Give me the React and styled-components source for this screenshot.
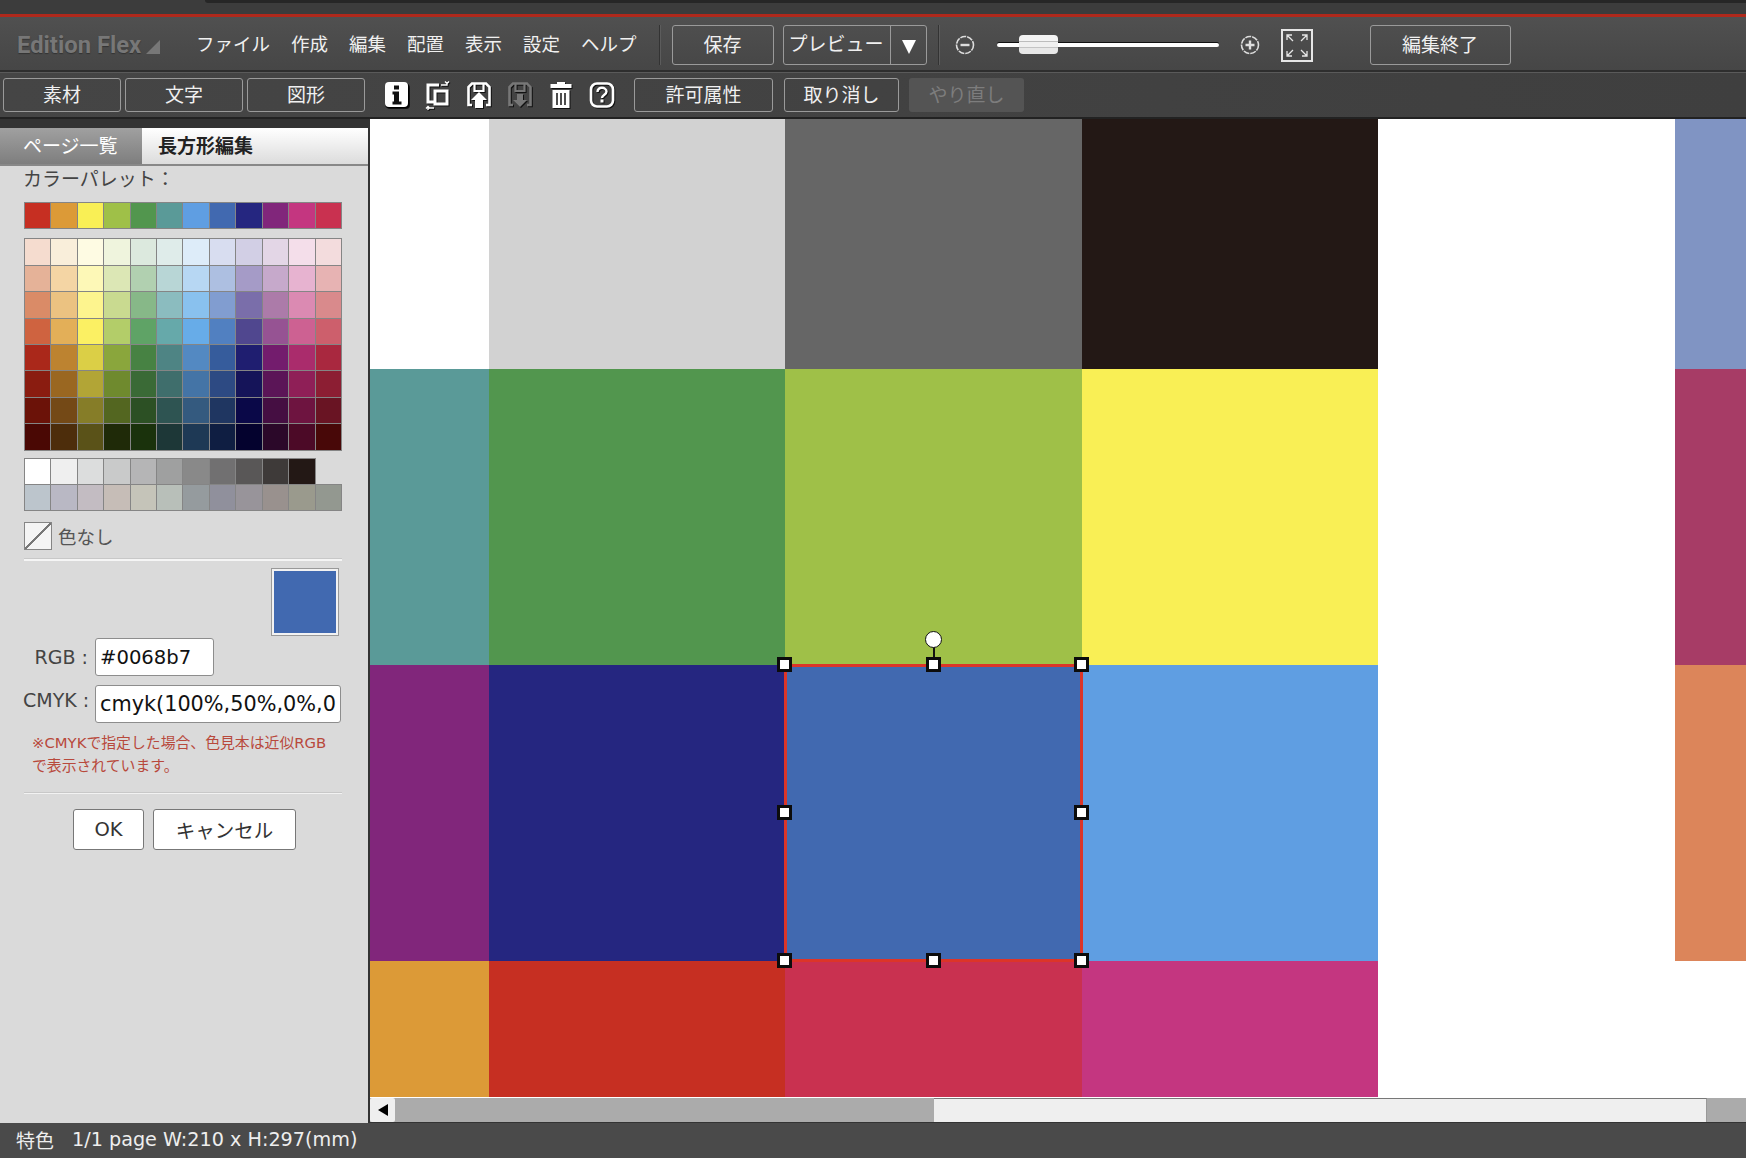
import React from "react";
import styled, { createGlobalStyle } from "styled-components";

const TOP_COLORS = ["#c62f22", "#dc9a37", "#f9ef55", "#9fc048", "#52964e", "#5a9a98", "#5f9ee2", "#4169b0", "#252680", "#81267b", "#c43680", "#c93150"];
const SHADES = [
  "#f5dccf #f9eeda #fefbe3 #eff4dd #dce9de #dfecea #ddecf9 #d8ddf0 #d2cfe5 #e3d6e6 #f4deea #f3dcdd",
  "#e5b298 #f4d5a4 #fdf8b7 #dce7b5 #b1d0b0 #b8d6d6 #b7d7f3 #adbfe1 #a59bc7 #c6a9cb #e7b3d0 #e7b3b3",
  "#da8b67 #ebc281 #fdf48e #c9da90 #87b888 #8bbcbf #89c1ee #819dd0 #7a6eaa #ac7ba9 #db8ab2 #d98a8c",
  "#cf6340 #e3af58 #fbf063 #b3cd69 #5fa366 #66a9aa #67ace8 #5180c1 #50478f #965393 #cd6192 #cd5f6c",
  "#aa281a #bd8330 #dbcf46 #8aa63c #478243 #4e8484 #5389c2 #365c9c #1f1e70 #731c6d #aa2c6c #a9283f",
  "#8a1c10 #9a6721 #b2a536 #6f8a2e #3a6a36 #3f6e6c #4474a6 #2d4a83 #151459 #5b1557 #8f1f57 #8c1e33",
  "#6b1208 #744916 #867d28 #536620 #2c5024 #2e5452 #345a7f #1f3661 #0a0848 #450e42 #6e1440 #691423",
  "#4a0804 #4d2d0b #5a5218 #1f2a08 #1a320c #1d3737 #1e3955 #0f1e42 #04022e #2b0829 #4c0a27 #480808",
].join(" ").split(" ");
const GREYS = [
  "#ffffff", "#efefef", "#dcdddd", "#c9caca", "#b5b5b6", "#9fa0a0", "#898989", "#717071", "#595757", "#3e3a39", "#231815", null,
  "#bcc5cc", "#b9b8c4", "#c3bcc2", "#c6bdb7", "#c5c4b9", "#b8bfb9", "#959b9e", "#90909c", "#98949a", "#99918e", "#9a9a8d", "#939890",
];
const SHEET = [
  "#ffffff", "#d2d2d2", "#666666", "#231815", "#ffffff", "#8094c3",
  "#5a9a98", "#52964e", "#9fc048", "#f9ef55", "#ffffff", "#a73c66",
  "#81267b", "#252680", "selected", "#5f9ee2", "#ffffff", "#dc855a",
  "#dc9a37", "#c62f22", "#c93150", "#c43680", "#ffffff", "#ffffff",
];
const HANDLES = [
  ["0%", "0%"], ["50%", "0%"], ["100%", "0%"],
  ["0%", "50%"], ["100%", "50%"],
  ["0%", "100%"], ["50%", "100%"], ["100%", "100%"],
];

const InfoIcon = () => (
  <svg width="26" height="28" viewBox="0 0 26 28">
    <rect x="1" y="2" width="24" height="25" rx="4" fill="#000" />
    <rect x="1" y="1" width="23" height="25" rx="4" fill="#fff" />
    <path d="M10 4.500h5v4h-5zM8.500 10.500h6.500v10h2.500v3h-9v-3H10v-7H8.500z" fill="#111" />
  </svg>
);
const ArrangeIcon = () => (
  <svg width="26" height="30" viewBox="0 0 26 30" fill="none" stroke="#fff">
    <path d="M14 4H3v17h6" strokeWidth="3" />
    <rect x="10" y="10" width="12" height="13" strokeWidth="3" />
    <path d="M16 4h6V1M20 .5l2 2 2-2M9 27H3v2M1 27.500l2-2 2 2" strokeWidth="1.400" />
  </svg>
);
const FloppyIcon = ({ $down }) => (
  <svg width="26" height="28" viewBox="0 0 26 28" fill="none" stroke={$down ? "#777" : "#fff"}>
    <path d="M6 24H2.500V6L6 2.500h14L23.500 6v18H20" strokeWidth="2.600" />
    <path d="M8.500 3v7h9V3" strokeWidth="2.200" />
    {$down ? (
      <path d="M10 13h6v6h4l-7 7-7-7h4z" fill="#777" stroke="none" />
    ) : (
      <path d="M13 11l8 8h-4v8H9v-8H5z" fill="#fff" stroke="none" />
    )}
  </svg>
);
const TrashIcon = () => (
  <svg width="24" height="28" viewBox="0 0 24 28">
    <path d="M8 3V1h8v2h6.500v4h-21V3z" fill="#fff" />
    <path d="M3.500 9h17v18h-17z" fill="#fff" />
    <path d="M8 12v12M12 12v12M16 12v12" stroke="#222" strokeWidth="1.600" />
  </svg>
);
const HelpIcon = () => (
  <svg width="26" height="28" viewBox="0 0 26 28" fill="none">
    <rect x="2" y="2.500" width="22" height="23" rx="6" stroke="#fff" strokeWidth="2.600" />
    <path d="M8.500 11c0-6 9-5 9-.5 0 3.500-4.500 3.500-4.500 6.500" stroke="#fff" strokeWidth="2.400" />
    <rect x="11.500" y="18.500" width="3" height="3" fill="#fff" />
  </svg>
);
const ZoomIcon = ({ $plus }) => (
  <svg width="20" height="20" viewBox="0 0 20 20" fill="none" stroke="#ddd">
    <circle cx="10" cy="10" r="8.500" strokeWidth="1.600" strokeDasharray="6 1" />
    <path d={$plus ? "M5.500 10h9M10 5.500v9" : "M5.500 10h9"} strokeWidth="2.400" />
  </svg>
);
const ExpandIcon = () => (
  <svg width="32" height="33" viewBox="0 0 32 33" fill="none" stroke="#e6e6e6">
    <rect x="1" y="1" width="30" height="31" strokeWidth="2" />
    <path d="M6 11V6h5M6 6l6 6M26 11V6h-5M26 6l-6 6M6 22v5h5M6 27l6-6M26 22v5h-5M26 27l-6-6" strokeWidth="1.300" />
  </svg>
);

const App = () => (
  <>
    <GlobalStyle />
    <Page>
      <TopStrip>
        <TopShade />
      </TopStrip>

      <MenuBar>
        <Logo>
          Edition Flex
          <LogoMark />
        </Logo>
        <Menu>
          {["ファイル", "作成", "編集", "配置", "表示", "設定", "ヘルプ"].map((m) => (
            <span key={m}>{m}</span>
          ))}
        </Menu>
        <Sep />
        <ToolButton $w={102}>保存</ToolButton>
        <PreviewGroup>
          <PreviewLabel>プレビュー</PreviewLabel>
          <PreviewArrow />
        </PreviewGroup>
        <Sep $second />
        <ZoomGroup>
          <ZoomIcon />
          <Slider>
            <SliderThumb />
          </Slider>
          <ZoomIcon $plus />
          <ExpandBox>
            <ExpandIcon />
          </ExpandBox>
        </ZoomGroup>
        <EndButton>編集終了</EndButton>
      </MenuBar>

      <SubBar>
        <ToolGroup>
          <ToolButton $w={118}>素材</ToolButton>
          <ToolButton $w={118}>文字</ToolButton>
          <ToolButton $w={118}>図形</ToolButton>
        </ToolGroup>
        <IconRow>
          <IconCell><InfoIcon /></IconCell>
          <IconCell><ArrangeIcon /></IconCell>
          <IconCell><FloppyIcon /></IconCell>
          <IconCell><FloppyIcon $down /></IconCell>
          <IconCell><TrashIcon /></IconCell>
          <IconCell><HelpIcon /></IconCell>
        </IconRow>
        <ActionGroup>
          <ToolButton $w={139}>許可属性</ToolButton>
          <ToolButton $w={115}>取り消し</ToolButton>
          <DisabledButton>やり直し</DisabledButton>
        </ActionGroup>
      </SubBar>

      <Main>
        <Sidebar>
          <TabStrip>
            <Tab>ページ一覧</Tab>
            <Tab $active>長方形編集</Tab>
          </TabStrip>
          <Panel>
            <PanelTitle>カラーパレット：</PanelTitle>
            <Palette>
              {TOP_COLORS.map((c) => (
                <Chip key={c} $c={c} />
              ))}
            </Palette>
            <Palette $gap={9}>
              {SHADES.map((c, i) => (
                <Chip key={i} $c={c} />
              ))}
            </Palette>
            <Palette $gap={7}>
              {GREYS.map((c, i) => (c ? <Chip key={i} $c={c} /> : <span key={i} />))}
            </Palette>
            <NoColorRow>
              <NoColorBox />
              色なし
            </NoColorRow>
            <Divider />
            <SwatchRow>
              <Swatch />
            </SwatchRow>
            <RgbRow>
              <RgbLabel>RGB :</RgbLabel>
              <ValueInput $w={119} $fs={19.6} readOnly value="#0068b7" />
            </RgbRow>
            <CmykRow>
              <CmykLabel>CMYK :</CmykLabel>
              <ValueInput $w={246} $fs={20.8} readOnly value="cmyk(100%,50%,0%,0%)" />
            </CmykRow>
            <Note>
              ※CMYKで指定した場合、色見本は近似RGB
              <br />
              で表示されています。
            </Note>
            <Divider $thin />
            <ButtonRow>
              <DialogButton $w={71}>OK</DialogButton>
              <DialogButton $w={143}>キャンセル</DialogButton>
            </ButtonRow>
          </Panel>
        </Sidebar>

        <Workspace>
          <Sheet>
            {SHEET.map((c, i) =>
              c === "selected" ? (
                <SelectedCell key={i}>
                  <RotateStem />
                  <RotateKnob />
                  {HANDLES.map(([x, y]) => (
                    <Handle key={x + y} style={{ left: x, top: y }} />
                  ))}
                </SelectedCell>
              ) : (
                <SheetCell key={i} $c={c} />
              ),
            )}
          </Sheet>
          <ScrollBar>
            <ScrollArrow />
            <ScrollThumb />
          </ScrollBar>
        </Workspace>
      </Main>

      <StatusBar>
        <StatusLabel>特色</StatusLabel>
        <span>1/1 page W:210 x H:297(mm)</span>
      </StatusBar>
    </Page>
  </>
);

export default App;

const FONT = `"Noto Sans", "Noto Sans CJK JP", sans-serif`;
const WIDE_FONT = `"DejaVu Sans", "Noto Sans CJK JP", sans-serif`;

const GlobalStyle = createGlobalStyle`
  html, body {
    margin: 0;
    height: 100%;
    overflow: hidden;
    background: #4a4a4a;
  }
  * {
    box-sizing: border-box;
  }
`;
const Page = styled.div`
  width: 1746px;
  height: 1158px;
  display: flex;
  flex-direction: column;
  font-family: ${FONT};
  color: #f0f0f0;
`;
const TopStrip = styled.div`
  height: 17px;
  flex: none;
  background: #3c3c3c;
  border-bottom: 3px solid #b0291c;
`;
const TopShade = styled.div`
  height: 3px;
  margin-left: 205px;
  background: #262626;
  border-bottom-left-radius: 3px;
`;
const MenuBar = styled.div`
  height: 55px;
  flex: none;
  display: flex;
  align-items: center;
  padding: 3px 0 0 17px;
  background: linear-gradient(#505050, #464646);
  border-bottom: 2px solid #2e2e2e;
`;
const Logo = styled.div`
  width: 143px;
  flex: none;
  display: flex;
  align-items: center;
  font-family: "Roboto", sans-serif;
  font-size: 23.800px;
  font-weight: 700;
  color: #777;
  text-shadow: 0 1px 1px #333;
  white-space: nowrap;
`;
const LogoMark = styled.i`
  width: 0;
  height: 0;
  margin: 4px 0 0 5px;
  border-style: solid;
  border-width: 0 0 14px 14px;
  border-color: transparent transparent #777 transparent;
`;
const Menu = styled.div`
  margin: -5px 0 0 36px;
  display: flex;
  gap: 21px;
  font-size: 18.500px;
  white-space: nowrap;
`;
const Sep = styled.div`
  width: 1px;
  height: 40px;
  flex: none;
  margin: ${(p) => (p.$second ? "0 16px 0 11px" : "0 12px 0 22px")};
  background: #333;
  box-shadow: 1px 0 0 #5c5c5c;
`;
const ToolButton = styled.div`
  width: ${(p) => p.$w}px;
  height: 34px;
  flex: none;
  display: flex;
  align-items: center;
  justify-content: center;
  padding-bottom: 2px;
  border: 1px solid #9a9a9a;
  border-radius: 3px;
  font-size: 19px;
  white-space: nowrap;
  ${MenuBar} & {
    height: 40px;
  }
`;
const PreviewGroup = styled.div`
  width: 144px;
  height: 40px;
  flex: none;
  margin-left: 9px;
  display: flex;
  border: 1px solid #9a9a9a;
  border-radius: 3px;
`;
const PreviewLabel = styled.div`
  width: 107px;
  padding-left: 5px;
  line-height: 36px;
  font-size: 19px;
  white-space: nowrap;
  border-right: 1px solid #9a9a9a;
`;
const PreviewArrow = styled.div`
  width: 0;
  height: 0;
  margin: 14px 0 0 11px;
  border-style: solid;
  border-width: 14px 7px 0 7px;
  border-color: #fff transparent transparent transparent;
`;
const ZoomGroup = styled.div`
  display: flex;
  align-items: center;
`;
const Slider = styled.div`
  position: relative;
  width: 222px;
  height: 4px;
  margin: 0 21px 0 22px;
  background: #fff;
  border-radius: 2px;
  box-shadow: 0 -1px 0 #111;
`;
const SliderThumb = styled.div`
  position: absolute;
  left: 22px;
  top: -8px;
  width: 39px;
  height: 19px;
  border-radius: 4px;
  background: linear-gradient(#f4f4f4 0 30%, #bdbdbd 30% 36%, #f0f0f0 36% 62%, #c4c4c4 62% 68%, #e8e8e8 68%);
`;
const ExpandBox = styled.div`
  display: flex;
  margin-left: 21px;
`;
const EndButton = styled(ToolButton)`
  width: 141px;
  margin-left: 57px;
`;
const SubBar = styled.div`
  height: 47px;
  flex: none;
  display: flex;
  align-items: center;
  padding: 1px 0 1px 3px;
  background: linear-gradient(90deg, #454545, #3f3f3f);
  border-top: 1px solid #5a5a5a;
  border-bottom: 2px solid #222;
`;
const ToolGroup = styled.div`
  display: flex;
  gap: 4px;
`;
const IconRow = styled.div`
  width: 244px;
  margin-left: 19px;
  display: flex;
  gap: 15px;
`;
const IconCell = styled.div`
  width: 26px;
  height: 28px;
  flex: none;
  display: flex;
  justify-content: center;
  svg {
    filter: drop-shadow(1px 1px 0 #111);
  }
`;
const ActionGroup = styled.div`
  margin-left: 6px;
  display: flex;
  gap: 11px;
`;
const DisabledButton = styled.div`
  width: 115px;
  height: 34px;
  margin-left: -1px;
  padding-bottom: 2px;
  display: flex;
  align-items: center;
  justify-content: center;
  background: #545454;
  color: #7d7d7d;
  border-radius: 3px;
  font-size: 19px;
`;
const Main = styled.div`
  flex: 1;
  min-height: 0;
  display: flex;
`;
const Sidebar = styled.div`
  width: 370px;
  flex: none;
  background: #dadada;
  border-right: 2px solid #333;
`;
const TabStrip = styled.div`
  height: 47px;
  padding-top: 9px;
  display: flex;
  background: #333;
`;
const Tab = styled.div`
  width: ${(p) => (p.$active ? "auto" : "142px")};
  flex: ${(p) => (p.$active ? 1 : "none")};
  padding-left: ${(p) => (p.$active ? "16px" : "23px")};
  line-height: 36px;
  font-size: 19px;
  font-weight: ${(p) => (p.$active ? 700 : 400)};
  color: ${(p) => (p.$active ? "#222" : "#fff")};
  background: ${(p) => (p.$active ? "linear-gradient(#ffffff, #dcdcdc)" : "linear-gradient(#a0a0a0, #7e7e7e)")};
  border-bottom: 2px solid #888;
`;
const Panel = styled.div`
  padding: 0 0 0 24px;
  color: #444;
`;
const PanelTitle = styled.div`
  height: 36px;
  margin-left: -1px;
  font-size: 19px;
  line-height: 26px;
`;
const Palette = styled.div`
  width: 318px;
  margin-top: ${(p) => p.$gap || 0}px;
  padding: 1px;
  display: grid;
  grid-template-columns: repeat(12, 1fr);
  grid-auto-rows: 25.400px;
  gap: 1px;
`;
const Chip = styled.div`
  background: ${(p) => p.$c};
  box-shadow: 0 0 0 1px #858585;
`;
const NoColorRow = styled.div`
  height: 28px;
  margin-top: 11px;
  display: flex;
  align-items: center;
  gap: 6px;
  font-size: 18.500px;
  color: #555;
`;
const NoColorBox = styled.div`
  width: 28px;
  height: 28px;
  border: 1px solid #858585;
  background: linear-gradient(to top left, #f4f4f4 calc(50% - 1px), #777 calc(50% - 1px), #777 calc(50% + 1px), #f4f4f4 calc(50% + 1px));
`;
const Divider = styled.div`
  width: 318px;
  height: ${(p) => (p.$thin ? 2 : 3)}px;
  margin-top: ${(p) => (p.$thin ? 14 : 8)}px;
  background: ${(p) => (p.$thin ? "#f2f2f2" : "#f5f5f5")};
  border-top: 1px solid #c8c8c8;
`;
const SwatchRow = styled.div`
  width: 314px;
  margin-top: 8px;
  display: flex;
  justify-content: flex-end;
`;
const Swatch = styled.div`
  width: 66px;
  height: 66px;
  background: #4169b0;
  border: 2px solid #f2f2f2;
  box-shadow: 0 0 0 1px #999;
`;
const RgbRow = styled.div`
  display: flex;
  align-items: center;
  height: 38px;
  margin-top: 3px;
`;
const RgbLabel = styled.div`
  width: 71px;
  padding-right: 7px;
  text-align: right;
  font-family: ${WIDE_FONT};
  font-size: 19px;
  white-space: nowrap;
`;
const ValueInput = styled.input`
  width: ${(p) => p.$w}px;
  height: 38px;
  padding: 0 4px;
  border: 1px solid #8d8d8d;
  border-radius: 3px;
  background: #fff;
  color: #111;
  font-family: "DejaVu Sans", sans-serif;
  font-size: ${(p) => p.$fs}px;
  outline: none;
`;
const CmykRow = styled.div`
  display: flex;
  height: 38px;
  margin-top: 9px;
`;
const CmykLabel = styled.div`
  width: 71px;
  margin-left: -1px;
  margin-right: 1px;
  font-family: ${WIDE_FONT};
  font-size: 19px;
  line-height: 30px;
  white-space: nowrap;
`;
const Note = styled.div`
  margin: 9px 0 0 8px;
  font-family: ${WIDE_FONT};
  font-size: 14.850px;
  line-height: 23px;
  color: #b8493c;
  white-space: nowrap;
`;
const ButtonRow = styled.div`
  margin: 15px 0 0 49px;
  display: flex;
  gap: 9px;
`;
const DialogButton = styled.div`
  width: ${(p) => p.$w}px;
  height: 41px;
  display: flex;
  align-items: center;
  justify-content: center;
  background: #fff;
  border: 1px solid #777;
  border-radius: 3px;
  font-family: ${WIDE_FONT};
  font-size: 19.500px;
  color: #333;
`;
const Workspace = styled.div`
  flex: 1;
  min-width: 0;
  display: flex;
  flex-direction: column;
  background: #fff;
`;
const Sheet = styled.div`
  flex: 1;
  display: grid;
  grid-template-columns: 119px 296px 297px 296px 297px 71px;
  grid-template-rows: 250px 296px 296px 136px;
`;
const SheetCell = styled.div`
  background: ${(p) => p.$c};
`;
const SelectedCell = styled.div`
  position: relative;
  background: #4169b0;
  box-shadow: inset 0 0 0 2px #dc3528, 0 0 0 1px #dc3528;
`;
const Handle = styled.div`
  position: absolute;
  width: 15px;
  height: 15px;
  margin: -8px 0 0 -8px;
  background: #fff;
  border: 3px solid #0c0c0c;
`;
const RotateStem = styled.div`
  position: absolute;
  left: 50%;
  top: -22px;
  width: 2px;
  height: 22px;
  margin-left: -1px;
  background: #111;
`;
const RotateKnob = styled.div`
  position: absolute;
  left: 50%;
  top: -34px;
  width: 17px;
  height: 17px;
  margin-left: -8.500px;
  border-radius: 50%;
  background: #fff;
  border: 1.500px solid #111;
`;
const ScrollBar = styled.div`
  height: 25px;
  flex: none;
  display: flex;
  background: #ababab;
  border-bottom: 1px solid #333;
`;
const ScrollArrow = styled.div`
  width: 25px;
  flex: none;
  margin-right: 539px;
  background: #efefef;
  border-radius: 2px;
  display: flex;
  align-items: center;
  justify-content: center;
  &::before {
    content: "";
    border-style: solid;
    border-width: 6px 10px 6px 0;
    border-color: transparent #000 transparent transparent;
  }
`;
const ScrollThumb = styled.div`
  width: 773px;
  flex: none;
  background: #efefef;
  border-top: 1px solid #777;
  border-right: 1px solid #999;
`;
const StatusBar = styled.div`
  height: 35px;
  flex: none;
  display: flex;
  gap: 18px;
  align-items: center;
  padding: 0 0 2px 16px;
  background: #4a4a4a;
  font-family: "DejaVu Sans", sans-serif;
  font-size: 19.200px;
  color: #eee;
  white-space: nowrap;
`;
const StatusLabel = styled.span`
  font-family: ${FONT};
  font-size: 19px;
`;
